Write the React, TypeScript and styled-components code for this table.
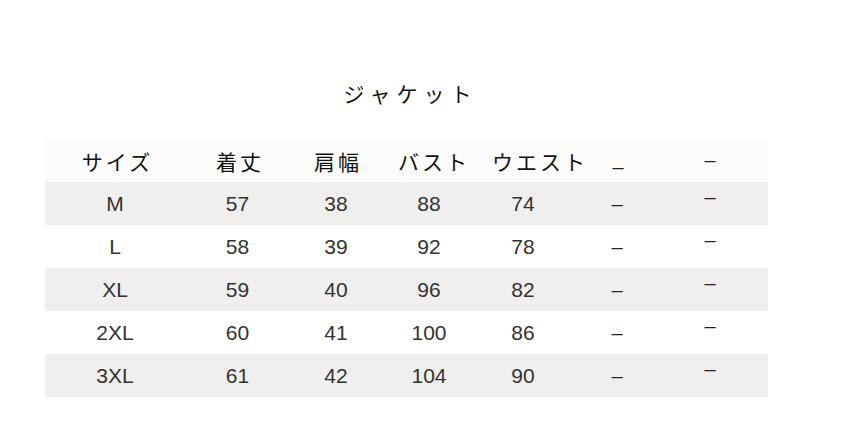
import React from "react";
import styled, { createGlobalStyle } from "styled-components";

const GlobalStyle = createGlobalStyle`
    html, body {
        margin: 0;
        padding: 0;
        background: #ffffff;
    }
    body {
        font-family: "Noto Sans CJK JP", "Liberation Sans", sans-serif;
    }
`;

const Page = styled.div`
    width: 861px;
    height: 442px;
    padding: 78px 0 0 45px;
    box-sizing: border-box;
`;

const Sheet = styled.div`
    width: 723px;
    display: flex;
    flex-direction: column;
`;

const Title = styled.h2`
    margin: 0 0 32px;
    height: 30px;
    line-height: 30px;
    text-align: center;
    font-family: "Noto Sans CJK JP", sans-serif;
    font-weight: 400;
    font-size: 21px;
    letter-spacing: 6px;
    padding-left: 8px;
    color: #111111;
`;

const HeaderRow = styled.div`
    display: grid;
    grid-template-columns: 145px 100px 96px 96px 116px 40px 130px;
    height: 42px;
    align-items: center;
    background: #fbfbfb;
`;

const HeadCell = styled.div<{ $padLeft?: number }>`
    text-align: center;
    padding-left: ${(p) => p.$padLeft ?? 0}px;
    font-family: "Noto Sans CJK JP", sans-serif;
    font-size: 21px;
    letter-spacing: 3px;
    color: #111111;
    white-space: nowrap;
    line-height: 1;
`;

const Row = styled.div<{ $shaded: boolean }>`
    display: grid;
    grid-template-columns: 140px 105px 92px 94px 94px 94px 92px;
    height: 43px;
    align-items: center;
    background: ${(p) => (p.$shaded ? "#f0efee" : "#ffffff")};
`;

const Cell = styled.div`
    text-align: center;
    font-family: "Liberation Sans", Arial, sans-serif;
    font-size: 21px;
    color: #333333;
    line-height: 1;
`;

const Dash = styled.span<{ $shift: number }>`
    display: inline-block;
    transform: translateY(${(p) => p.$shift}px);
    font-family: "Liberation Sans", Arial, sans-serif;
    font-size: 20px;
    color: #222222;
    letter-spacing: 0;
`;

const headers = ["サイズ", "着丈", "肩幅", "バスト", "ウエスト"];

const rows = [
    ["M", "57", "38", "88", "74"],
    ["L", "58", "39", "92", "78"],
    ["XL", "59", "40", "96", "82"],
    ["2XL", "60", "41", "100", "86"],
    ["3XL", "61", "42", "104", "90"],
];

const App: React.FC = () => {
    return (
        <>
            <GlobalStyle />
            <Page>
                <Sheet>
                    <Title>ジャケット</Title>
                    <HeaderRow>
                        {headers.map((h) => (
                            <HeadCell key={h}>{h}</HeadCell>
                        ))}
                        <HeadCell>
                            <Dash $shift={5}>–</Dash>
                        </HeadCell>
                        <HeadCell $padLeft={14}>
                            <Dash $shift={-2}>–</Dash>
                        </HeadCell>
                    </HeaderRow>
                    {rows.map((r, i) => (
                        <Row key={r[0]} $shaded={i % 2 === 0}>
                            {r.map((v, j) => (
                                <Cell key={j}>{v}</Cell>
                            ))}
                            <Cell>
                                <Dash $shift={0}>–</Dash>
                            </Cell>
                            <Cell>
                                <Dash $shift={-7}>–</Dash>
                            </Cell>
                        </Row>
                    ))}
                </Sheet>
            </Page>
        </>
    );
};

export default App;
